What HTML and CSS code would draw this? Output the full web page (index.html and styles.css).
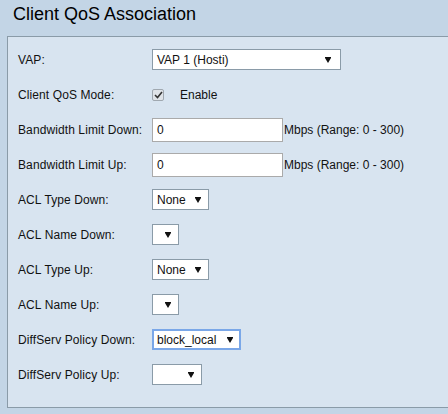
FILE: index.html
```html
<!DOCTYPE html>
<html lang="en">
<head>
    <meta charset="UTF-8">
    <title>Client QoS Association</title>
    <link rel="stylesheet" href="styles.css">
</head>
<body>
    <h1 class="page-title">Client QoS Association</h1>
    <div class="panel">
        <div class="row">
            <span class="label">VAP:</span>
            <span class="select wide">VAP 1 (Hosti)<i class="arrow"></i></span>
        </div>
        <div class="row">
            <span class="label">Client QoS Mode:</span>
            <span class="checkbox"><svg width="9" height="8" viewBox="0 0 9 8"><path d="M1 4 L3.5 6.5 L8 1" fill="none" stroke="#333" stroke-width="1.6"/></svg></span>
            <span class="enable">Enable</span>
        </div>
        <div class="row">
            <span class="label">Bandwidth Limit Down:</span>
            <span class="input">0</span>
            <span class="hint">Mbps (Range: 0 - 300)</span>
        </div>
        <div class="row">
            <span class="label">Bandwidth Limit Up:</span>
            <span class="input">0</span>
            <span class="hint">Mbps (Range: 0 - 300)</span>
        </div>
        <div class="row">
            <span class="label">ACL Type Down:</span>
            <span class="select none">None<i class="arrow"></i></span>
        </div>
        <div class="row">
            <span class="label">ACL Name Down:</span>
            <span class="select empty"><i class="arrow"></i></span>
        </div>
        <div class="row">
            <span class="label">ACL Type Up:</span>
            <span class="select none">None<i class="arrow"></i></span>
        </div>
        <div class="row">
            <span class="label">ACL Name Up:</span>
            <span class="select empty"><i class="arrow"></i></span>
        </div>
        <div class="row">
            <span class="label">DiffServ Policy Down:</span>
            <span class="select policy focused">block_local<i class="arrow"></i></span>
        </div>
        <div class="row">
            <span class="label">DiffServ Policy Up:</span>
            <span class="select policy-empty"><i class="arrow"></i></span>
        </div>
    </div>
</body>
</html>
```

FILE: styles.css
```css
body {
    margin: 0;
    background-color: #c3d5e6;
    font-family: "Liberation Sans", Arial, sans-serif;
    font-size: 12px;
    color: #111;
}

.page-title {
    margin: 0;
    height: 36px;
    padding-left: 13px;
    font-size: 18px;
    font-weight: normal;
    line-height: 29px;
    color: #000;
}

/* main settings panel */
.panel {
    margin-left: 7px;
    border-top: 1px solid #8a9ba8;
    border-left: 1px solid #8a9ba8;
    border-bottom: 1px solid #8a9ba8;
    background-color: #d8e4f0;
    padding: 5px 0 15px 10px;
}

.row {
    display: flex;
    align-items: center;
    height: 35px;
}

.label {
    width: 134px;
    flex-shrink: 0;
    letter-spacing: 0.1px;
}

.select {
    display: flex;
    align-items: center;
    justify-content: space-between;
    box-sizing: border-box;
    height: 21px;
    padding: 0 7px 0 4px;
    background-color: #fff;
    border: 1px solid #8a9ba8;
    font-size: 12px;
}

.select.wide { width: 189px; padding-right: 9px; }
.select.none { width: 57px; }
.select.empty { width: 27px; justify-content: flex-end; }
.select.policy { width: 89px; }
.select.policy-empty { width: 50px; justify-content: flex-end; }

.select.focused {
    border: 2px solid #7aa7e8;
    padding-left: 3px;
    padding-right: 6px;
}

.arrow {
    display: block;
    width: 0;
    height: 0;
    margin-top: 1px;
    border-left: 3px solid transparent;
    border-right: 3px solid transparent;
    border-top: 5px solid #111;
    box-shadow: 0 -1px 0 #111;
}

.checkbox {
    display: flex;
    align-items: center;
    justify-content: center;
    box-sizing: border-box;
    width: 12px;
    height: 12px;
    border: 1px solid #a0a8b0;
    border-radius: 2px;
    background-color: #dfe3e8;
}

.enable {
    margin-left: 16px;
}

.input {
    display: flex;
    align-items: center;
    box-sizing: border-box;
    width: 131px;
    height: 24px;
    padding-left: 4px;
    background-color: #fff;
    border: 1px solid #aaa;
}

.hint {
    margin-left: 1px;
}
```
